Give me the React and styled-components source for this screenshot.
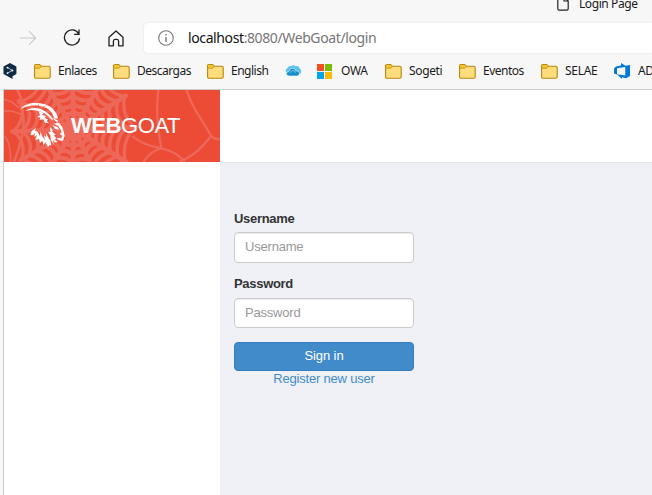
import React from "react";
import styled, { createGlobalStyle } from "styled-components";

const Global = createGlobalStyle`
  *{box-sizing:border-box}
  html,body{margin:0;height:100%;overflow:hidden;background:#f7f7f7}
`;
const Window = styled.div`
  width:652px;height:495px;overflow:hidden;display:flex;flex-direction:column;
  background:#f7f7f7;color:#1a1a1a;font-family:"Noto Sans","Open Sans",sans-serif;
`;
const TabStrip = styled.div`
  height:23px;padding-left:557px;display:flex;align-items:flex-start;
  svg{flex:none;margin-top:-4px}
`;
const TabTitle = styled.span`
  margin:-4px 0 0 10px;font-size:12px;line-height:16px;letter-spacing:-.42px;white-space:nowrap;
`;
const AddressRow = styled.div`
  height:30px;display:flex;align-items:center;padding-left:20px;
  svg{flex:none;display:block}
`;
const NavIcons = styled.div`
  width:124px;display:flex;align-items:center;gap:27px;
`;
const AddressBar = styled.div`
  flex:1;height:30px;background:#fff;border-radius:4px 0 0 4px;display:flex;align-items:center;
  padding-left:14px;gap:14px;box-shadow:0 0 2px #ddd;
`;
const Url = styled.span`
  font-size:14px;line-height:20px;letter-spacing:-.39px;color:#767676;white-space:nowrap;
  b{font-weight:400;color:#111}
`;
const Bookmarks = styled.div`
  height:36px;display:flex;align-items:center;padding-left:3px;
`;
const Bookmark = styled.div`
  flex:none;width:${p => p.$w}px;display:flex;align-items:center;gap:${p => p.$gap || 7}px;
  font-size:12px;line-height:18px;letter-spacing:${p => p.$ls || 0}px;white-space:nowrap;
  svg{flex:none;display:block}
`;
const Page = styled.div`
  flex:1;margin-left:3px;border-left:1px solid #ccc;border-top:1px solid #ccc;display:flex;
  background:#fff;font-family:"Liberation Sans",Arial,sans-serif;
`;
const Sidebar = styled.aside`width:216px;flex:none;background:#fff;`;
const Brand = styled.div`
  height:72px;background:#ec4b36;display:grid;overflow:hidden;
  >*{grid-area:1/1}
  svg{display:block}
`;
const BrandName = styled.div`
  margin:22px 0 0 67px;font-size:22px;line-height:28px;color:#fff;letter-spacing:-.42px;z-index:1;
`;
const Main = styled.main`flex:1;display:flex;flex-direction:column;`;
const Header = styled.header`height:73px;background:#fff;border-bottom:1px solid #e5e6ec;`;
const Content = styled.section`flex:1;background:#f0f1f7;padding:47px 0 0 14px;`;
const Form = styled.form`width:180px;display:flex;flex-direction:column;`;
const Label = styled.label`
  font-size:13px;line-height:18px;font-weight:700;color:#333;letter-spacing:-.3px;margin-bottom:${p => p.$mb}px;
`;
const Input = styled.input`
  width:180px;height:${p => p.$h}px;margin:0 0 ${p => p.$mb}px;padding:0 10px 2px;border:1px solid #ccc;border-radius:4px;
  background:#fff;box-shadow:inset 0 1px 1px rgba(0,0,0,.075);font:13px "Liberation Sans",Arial,sans-serif;
  outline:none;letter-spacing:-.2px;
  &::placeholder{color:#999;opacity:1}
`;
const SignIn = styled.button`
  height:29px;padding:0 0 2px;border:1px solid #357ebd;border-radius:4px;background:#428bca;color:#fff;
  font:13px "Liberation Sans",Arial,sans-serif;letter-spacing:-.1px;
`;
const Register = styled.a`
  text-align:center;color:#428bca;font-size:13px;line-height:16px;letter-spacing:-.2px;
`;

const Folder = () => (
  <svg width="17" height="15" viewBox="0 0 17 15">
    <path d="M.6 2Q.6.6 2 .6H5.6L7.5 2.3H14.8Q16.2 2.3 16.2 3.8V12.7Q16.2 14.2 14.8 14.2H2Q.6 14.2.6 12.7Z" fill="#ffdc7c" stroke="#b8860b" strokeWidth="1.1"/>
    <path d="M1.1 1.7Q1.2 1.1 2 1.1H5.4L7 2.5 5.4 4H1.1Z" fill="#f5c52d"/>
    <path d="M.8 4.2H5.4L7.4 2.5" fill="none" stroke="#b8860b" strokeWidth=".8"/>
  </svg>
);
const DeepL = () => (
  <svg width="14" height="16" viewBox="0 0 14 16">
    <path d="M7 0 13.4 3.5V11L9.5 13.2V16L6 14 .5 11V3.5Z" fill="#0f2b46"/>
    <path d="M4.5 4.5 9.3 7.4 4.5 10.2" fill="none" stroke="#dfe8ef" strokeWidth=".8"/>
    <g fill="#fff"><circle cx="4.5" cy="4.7" r=".9"/><circle cx="9.4" cy="7.4" r="1"/><circle cx="4.5" cy="10.1" r=".9"/></g>
  </svg>
);
const Cloud = () => (
  <svg width="17" height="12" viewBox="0 0 17 12">
    <path d="M1.2 7Q-.3 4.5 2.2 3.4 3 .4 6.2 1 8.3-.6 10.5 1.2 14 .4 14.6 3.4 17.3 5 15.5 8.4L12 10 3 9Z" fill="#5cc3ee"/>
    <path d="M4.5 11Q1.4 11 1.4 8.5 1.7 6.5 4 6.5 4.3 3.4 7.4 3.2 10.2 3.3 10.8 5.8 14.2 5.5 14.5 8.4 14.2 11 12 11Z" fill="#168fc9" stroke="#e5f7fd" strokeWidth=".6"/>
    <path d="M5.5 7.8Q6.2 5.2 8 5.4 10 5.5 10.3 7.8" fill="none" stroke="#bdeafa" strokeWidth=".6"/>
  </svg>
);
const MicrosoftLogo = () => (
  <svg width="15" height="15" viewBox="0 0 15 15">
    <path fill="#f25022" d="M0 0h7v7H0z"/><path fill="#7fba00" d="M8 0h7v7H8z"/>
    <path fill="#00a4ef" d="M0 8h7v7H0z"/><path fill="#ffb900" d="M8 8h7v7H8z"/>
  </svg>
);
const DevOps = () => (
  <svg width="16" height="16" viewBox="0 0 16 16">
    <path fill="#0078d7" fillRule="evenodd" d="M0 5.5 2 3.6 7 2.4V0L11.5 2.8 16 2V13L12 15.2 8 14.2V16L3.5 11.8 0 10.6ZM3 5.2V11.2L11.3 12.6V4Z"/>
  </svg>
);

const CENTER = [222, 130];
const SPOKES = [-92, -60, -33, -2, 32, 64, 92, 122, 150, 178, 207, 238];
const RINGS = [31, 54, 78, 103, 129, 156, 182];
const polar = (deg, r) => {
  const a = (deg * Math.PI) / 180;
  return [CENTER[0] + Math.cos(a) * r, CENTER[1] + Math.sin(a) * r].map(n => n.toFixed(1)).join(" ");
};
const spokePath = SPOKES.map(a => `M${polar(a, 8)}L${polar(a, 185)}`).join("");
const ringPaths = RINGS.map(r =>
  SPOKES.map((a, i) => {
    const b = i === SPOKES.length - 1 ? SPOKES[0] + 360 : SPOKES[i + 1];
    return `M${polar(a, r)}Q${polar((a + b) / 2, r * 0.8)} ${polar(b, r)}`;
  }).join("")
);

const Web = () => (
  <svg width="216" height="72" viewBox="12 12 648 216">
    <g fill="none" stroke="#ee6859" strokeLinecap="round">
      <circle cx={CENTER[0]} cy={CENTER[1]} r="20" fill="#ee6859" stroke="none" />
      <path d={spokePath} strokeWidth="14" />
      {ringPaths.map((d, i) => <path key={i} d={d} strokeWidth={14 - i * 0.7} />)}
      <path d="M52 12Q72 48 68 82Q80 130 42 228" strokeWidth="8" />
      <path d="M12 76Q34 70 68 88M12 40Q38 45 55 65M12 150Q32 165 32 228" strokeWidth="5" />
      <path d="M398 151Q430 178 484 187Q522 194 553 224M475 12Q465 92 484 187Q450 196 430 228M560 12C575 68 610 105 633 150C609 180 589 205 541 226M633 149Q645 162 660 159" strokeWidth="7" />
    </g>
  </svg>
);
const Goat = () => (
  <svg width="216" height="72" viewBox="12 12 648 216">
    <g transform="translate(36 18)" fill="#fff">
      <path d="M26 50C40 34 70 29 98 37C119 43 134 59 138 79L127 80C122 59 106 45 84 42C59 38 43 43 26 50Z"/>
      <path d="M39 57C58 45 79 45 99 58C112 66 121 77 124 85L116 81C105 66 92 59 76 56C63 53 53 54 39 57Z"/>
      <path d="M80 57 84 70 76 74 86 78 82 84 94 82 99 92 111 94 104 86 109 83 98 78 102 73 91 69 94 62Z"/>
      <path d="M120 77 139 86 135 91 142 94 151 105 154 115 158 132 153 146 141 145 134 138 148 139 151 131 143 126 149 121 145 111 138 101 124 95 137 93Z"/>
      <path d="M71 108 59 118 55 129 62 130 69 122 67 134 75 129 70 145 81 140 84 153 91 146 94 159 101 151 108 166 113 158 118 162 115 147 107 132 101 121 103 136 96 130 99 144 90 132 85 119 84 133 77 119 69 116Z"/>
      <path d="M114 105 123 115 119 118 132 128 126 130 133 139 128 143 138 151 128 151 122 142 125 157 117 145 115 130 108 121 115 120Z"/>
      <path d="M121 98 137 106 142 113 129 111Z"/>
    </g>
    <g transform="translate(36 18)" fill="none" stroke="#ef5a49" strokeWidth="2">
      <path d="M42 44 47 49M59 38 62 44M80 37 79 44M100 41 94 48"/>
    </g>
  </svg>
);

const bookmarks = [
  [DeepL, "", 31],
  [Folder, "Enlaces", 79, -.48],
  [Folder, "Descargas", 94, -.5],
  [Folder, "English", 78, -.5],
  [Cloud, "", 32],
  [MicrosoftLogo, "OWA", 68, -.3, 9],
  [Folder, "Sogeti", 74, -.35],
  [Folder, "Eventos", 82, -.5],
  [Folder, "SELAE", 73, -.3],
  [DevOps, "AD", 60, -.3, 8],
];

export default function App() {
  return (
    <Window>
      <Global />
      <TabStrip>
        <svg width="12" height="15" viewBox="0 0 12 15" fill="none" stroke="#222" strokeWidth="1.2">
          <path d="M.8.7H7L11.2 5V12.8Q11.2 14.2 9.8 14.2H2.2Q.8 14.2.8 12.8ZM7 .7V5H11.2" />
        </svg>
        <TabTitle>Login Page</TabTitle>
      </TabStrip>
      <AddressRow>
        <NavIcons>
          <svg width="16" height="16" viewBox="0 0 16 16" fill="none" stroke="#c9c9c9" strokeWidth="1.1"><path d="M0 8H15.5M9 1.2 15.7 8 9 14.8" /></svg>
          <svg width="18" height="18" viewBox="0 0 18 18" fill="none" stroke="#202020" strokeWidth="1.3"><path d="M15.8 5A7.6 7.6 0 1 0 16.6 9.2M11.2 5.3H16V.6" /></svg>
          <svg width="16" height="17" viewBox="0 0 16 17" fill="none" stroke="#202020" strokeWidth="1.3" strokeLinejoin="round"><path d="M1 7.3 8 1 15 7.3V15.8H10.6V11.2Q10.6 9.3 9 9.3H7Q5.4 9.3 5.4 11.2V15.8H1Z" /></svg>
        </NavIcons>
        <AddressBar>
          <svg width="16" height="16" viewBox="0 0 16 16" fill="none" stroke="#777" strokeWidth="1.1"><circle cx="8" cy="8" r="7.3" /><path d="M8 7V12M8 4V5.5" strokeWidth="1.4" /></svg>
          <Url><b>localhost</b>:8080/WebGoat/login</Url>
        </AddressBar>
      </AddressRow>
      <Bookmarks>
        {bookmarks.map(([Icon, label, w, ls, gap], i) => (
          <Bookmark key={i} $w={w} $ls={ls} $gap={gap}><Icon />{label && <span>{label}</span>}</Bookmark>
        ))}
      </Bookmarks>
      <Page>
        <Sidebar>
          <Brand><Web /><Goat /><BrandName><b>WEB</b>GOAT</BrandName></Brand>
        </Sidebar>
        <Main>
          <Header />
          <Content>
            <Form>
              <Label htmlFor="user" $mb={4}>Username</Label>
              <Input id="user" placeholder="Username" $h={31} $mb={12} />
              <Label htmlFor="pass" $mb={5}>Password</Label>
              <Input id="pass" type="password" placeholder="Password" $h={30} $mb={14} />
              <SignIn type="button">Sign in</SignIn>
              <Register>Register new user</Register>
            </Form>
          </Content>
        </Main>
      </Page>
    </Window>
  );
}
